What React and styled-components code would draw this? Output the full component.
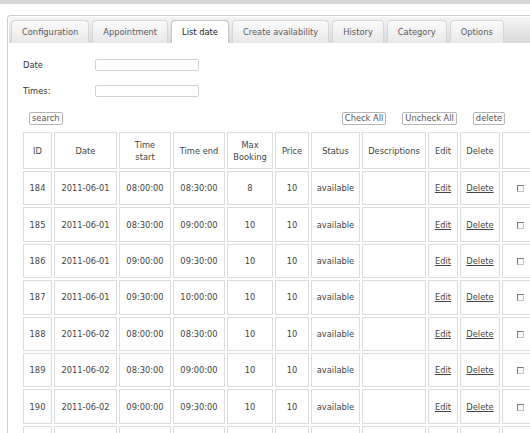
import React from 'react';
import styled, { createGlobalStyle } from 'styled-components';

const GlobalStyle = createGlobalStyle`
  html, body {
    margin: 0;
    padding: 0;
    background: #fff;
    overflow: hidden;
  }
  body {
    font-family: "DejaVu Sans", Verdana, sans-serif;
    font-size: 8.3px;
    color: #444;
  }
`;

const TopBar = styled.div`
  height: 4px;
  background: #d6d6d6;
`;

const Page = styled.div`
  padding: 11px 0 0 7px;
`;

const Panel = styled.div`
  width: 560px;
  border: 1px solid #cdcdcd;
  border-right: none;
  border-bottom: none;
  border-radius: 4px 0 0 0;
  padding: 1px 0 0 1px;
  height: 440px;
`;

const TabBar = styled.div`
  display: flex;
  align-items: flex-end;
  gap: 3px;
  height: 26px;
  padding: 0 0 0 2px;
  border-radius: 3px 0 0 0;
  background: linear-gradient(to bottom, #f4f4f4 0%, #f0f0f0 20%, #d9d9d9 100%);
`;

const Tab = styled.div`
  height: 23px;
  display: flex;
  align-items: center;
  padding: 0 10px;
  box-sizing: border-box;
  border: 1px solid ${(p) => (p.$active ? '#c2c2c2' : '#d6d6d6')};
  border-bottom: none;
  border-radius: 4px 4px 0 0;
  background: ${(p) => (p.$active ? '#fff' : 'linear-gradient(to bottom, #fafafa, #e8e8e8)')};
  color: ${(p) => (p.$active ? '#222' : '#5a5a5a')};
  white-space: nowrap;
`;

const Content = styled.div`
  padding: 16px 0 0 14px;
`;

const FormGrid = styled.div`
  display: grid;
  grid-template-columns: 72px 104px;
  row-gap: 14px;
  align-items: center;
`;

const Label = styled.label`
  color: #333;
`;

const TextInput = styled.input`
  box-sizing: border-box;
  width: 104px;
  height: 12px;
  border: 1px solid #d2d2d2;
  border-radius: 2px;
  padding: 0;
  background: #fff;
`;

const ButtonRow = styled.div`
  display: flex;
  align-items: center;
  gap: 16px;
  margin-top: 15px;
  width: 517px;
  box-sizing: border-box;
  padding: 0 35px 0 6px;
`;

const SmallButton = styled.button`
  font-family: inherit;
  font-size: 8.3px;
  color: #555;
  height: 13px;
  padding: 0 2px;
  line-height: 11px;
  background: #fff;
  border: 1px solid #b5b5b5;
  border-radius: 2px;
  margin-left: ${(p) => (p.$push ? 'auto' : '0')};
`;

const Table = styled.table`
  margin-top: 5px;
  margin-left: -2px;
  border-collapse: separate;
  border-spacing: 2px;
  table-layout: fixed;
  width: 519px;
`;

const Col = styled.col`
  width: ${(p) => p.$w}px;
`;

const HeadCell = styled.th`
  box-sizing: border-box;
  height: 37px;
  border: 1px solid #dcdcdc;
  font-weight: normal;
  color: #444;
  text-align: center;
  padding: 0 1px;
  line-height: 12px;
`;

const Cell = styled.td`
  box-sizing: border-box;
  height: 34.4px;
  border: 1px solid #dcdcdc;
  text-align: center;
  color: #444;
  padding: 0 1px;
  white-space: nowrap;
`;

const RowLink = styled.a`
  color: #444;
  text-decoration: underline;
  cursor: pointer;
`;

const Check = styled.span`
  display: inline-block;
  width: 5px;
  height: 5px;
  border: 1px solid #777;
  border-right-color: #c4c4c4;
  border-bottom-color: #c4c4c4;
  background: #fbfbfb;
  vertical-align: middle;
`;

const tabs = ['Configuration', 'Appointment', 'List date', 'Create availability', 'History', 'Category', 'Options'];

const widths = [29, 63, 52, 52, 46, 34, 49, 64, 30, 40, 36];

const rows = [
  [184, '2011-06-01', '08:00:00', '08:30:00', 8],
  [185, '2011-06-01', '08:30:00', '09:00:00', 10],
  [186, '2011-06-01', '09:00:00', '09:30:00', 10],
  [187, '2011-06-01', '09:30:00', '10:00:00', 10],
  [188, '2011-06-02', '08:00:00', '08:30:00', 10],
  [189, '2011-06-02', '08:30:00', '09:00:00', 10],
  [190, '2011-06-02', '09:00:00', '09:30:00', 10],
  [191, '2011-06-02', '09:30:00', '10:00:00', 10],
];

const App = () => {
  return (
    <>
      <GlobalStyle />
      <TopBar />
      <Page>
        <Panel>
          <TabBar>
            {tabs.map((t) => (
              <Tab key={t} $active={t === 'List date'}>{t}</Tab>
            ))}
          </TabBar>
          <Content>
            <FormGrid>
              <Label>Date</Label>
              <TextInput type="text" />
              <Label>Times:</Label>
              <TextInput type="text" />
            </FormGrid>
            <ButtonRow>
              <SmallButton>search</SmallButton>
              <SmallButton $push>Check All</SmallButton>
              <SmallButton>Uncheck All</SmallButton>
              <SmallButton>delete</SmallButton>
            </ButtonRow>
            <Table>
              <colgroup>
                {widths.map((w, i) => <Col key={i} $w={w} />)}
              </colgroup>
              <thead>
                <tr>
                  <HeadCell>ID</HeadCell>
                  <HeadCell>Date</HeadCell>
                  <HeadCell>Time<br />start</HeadCell>
                  <HeadCell>Time end</HeadCell>
                  <HeadCell>Max<br />Booking</HeadCell>
                  <HeadCell>Price</HeadCell>
                  <HeadCell>Status</HeadCell>
                  <HeadCell>Descriptions</HeadCell>
                  <HeadCell>Edit</HeadCell>
                  <HeadCell>Delete</HeadCell>
                  <HeadCell></HeadCell>
                </tr>
              </thead>
              <tbody>
                {rows.map(([id, date, start, end, max]) => (
                  <tr key={id}>
                    <Cell>{id}</Cell>
                    <Cell>{date}</Cell>
                    <Cell>{start}</Cell>
                    <Cell>{end}</Cell>
                    <Cell>{max}</Cell>
                    <Cell>10</Cell>
                    <Cell>available</Cell>
                    <Cell></Cell>
                    <Cell><RowLink>Edit</RowLink></Cell>
                    <Cell><RowLink>Delete</RowLink></Cell>
                    <Cell><Check /></Cell>
                  </tr>
                ))}
              </tbody>
            </Table>
          </Content>
        </Panel>
      </Page>
    </>
  );
};

export default App;
